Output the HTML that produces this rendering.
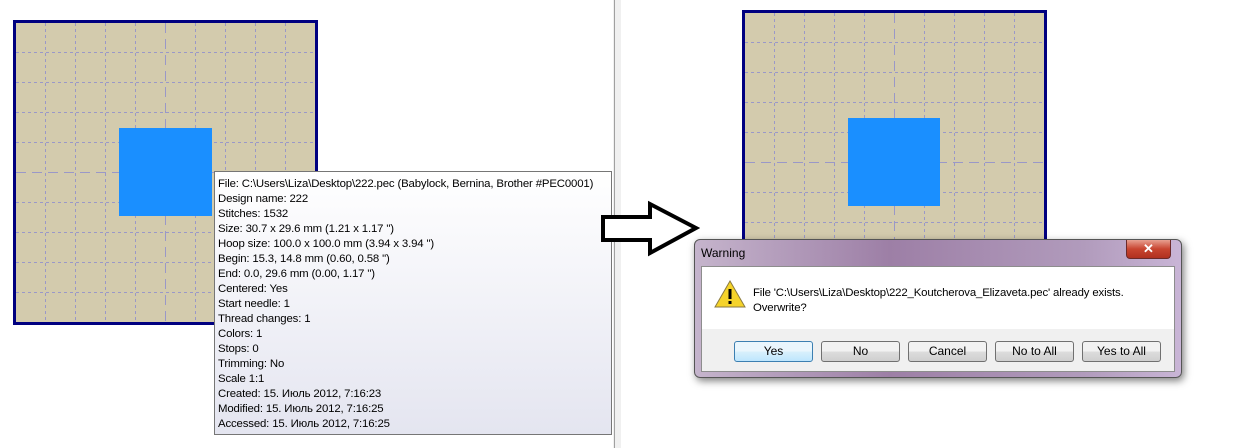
<!DOCTYPE html>
<html><head><style>
body{margin:0;width:1239px;height:448px;background:#fff;position:relative;overflow:hidden;font-family:Tahoma,"Liberation Sans",sans-serif}
.a{position:absolute}
.tip{left:214px;top:171px;width:398px;height:264px;border:1px solid #767676;background:linear-gradient(#fff,#e4e5f0);font-size:11.4px;letter-spacing:-0.15px;line-height:15px;color:#000;padding:5px 0 0 3px;box-sizing:border-box;white-space:nowrap}
.dlg{left:694px;top:239px;width:486px;height:137px;border:1px solid #555;border-radius:6px;background:linear-gradient(90deg,#c5b4cc,#9d7fa6 40%,#b19bbc 80%,#c9b5d6);box-shadow:2px 3px 8px rgba(0,0,0,.5)}
.btn{position:absolute;top:101px;width:77px;height:19px;border:1px solid #707070;border-radius:3px;background:linear-gradient(#f2f2f2 50%,#dddddd 50%,#cfcfcf);font-size:12px;text-align:center;line-height:19px}
</style></head><body>
<svg class="a" style="left:0;top:0" width="1239" height="448">
<rect x="14.5" y="21.5" width="302" height="302" fill="#d3cbad" stroke="#000080" stroke-width="3"/>
<g stroke="#9a98c8" stroke-dasharray="3,3">
<path d="M45.5 23V322M75.5 23V322M105.5 23V322M135.5 23V322M195.5 23V322M225.5 23V322M255.5 23V322M285.5 23V322"/>
<path d="M16 52.5H315M16 82.5H315M16 112.5H315M16 142.5H315M16 202.5H315M16 232.5H315M16 262.5H315M16 292.5H315"/>
</g>
<path d="M165.5 23V322M16 172.5H315" stroke="#9a98c8" stroke-dasharray="10,6"/>
<rect x="119" y="128" width="93" height="88" fill="#1a8fff"/>
<rect x="743.5" y="11.5" width="302" height="302" fill="#d3cbad" stroke="#000080" stroke-width="3"/>
<g stroke="#9a98c8" stroke-dasharray="3,3">
<path d="M774.5 13V312M804.5 13V312M834.5 13V312M864.5 13V312M924.5 13V312M954.5 13V312M984.5 13V312M1014.5 13V312"/>
<path d="M745 42.5H1044M745 72.5H1044M745 102.5H1044M745 132.5H1044M745 192.5H1044M745 222.5H1044M745 252.5H1044M745 282.5H1044"/>
</g>
<path d="M894.5 13V312M745 162.5H1044" stroke="#9a98c8" stroke-dasharray="10,6"/>
<rect x="848" y="118" width="92" height="88" fill="#1a8fff"/>
<rect x="613" y="0" width="8" height="448" fill="#f0f0f0"/>
<line x1="614.5" y1="0" x2="614.5" y2="448" stroke="#a0a0a0"/>
</svg>
<div class="a tip">File: C:\Users\Liza\Desktop\222.pec (Babylock, Bernina, Brother #PEC0001)<br>Design name: 222<br>Stitches: 1532<br>Size: 30.7 x 29.6 mm (1.21 x 1.17 ")<br>Hoop size: 100.0 x 100.0 mm (3.94 x 3.94 ")<br>Begin: 15.3, 14.8 mm (0.60, 0.58 ")<br>End: 0.0, 29.6 mm (0.00, 1.17 ")<br>Centered: Yes<br>Start needle: 1<br>Thread changes: 1<br>Colors: 1<br>Stops: 0<br>Trimming: No<br>Scale 1:1<br>Created: 15. Июль 2012, 7:16:23<br>Modified: 15. Июль 2012, 7:16:25<br>Accessed: 15. Июль 2012, 7:16:25</div>
<svg class="a" style="left:0;top:0" width="700" height="260"><path d="M603 217H650V204L696 228L650 253V240H603Z" fill="#fff" stroke="#000" stroke-width="4"/></svg>
<div class="a dlg">
<div class="a" style="left:6px;top:6px;font-size:12px">Warning</div>
<div class="a" style="left:431px;top:0;width:43px;height:18px;border:1px solid #6b2a2a;border-top:none;border-radius:0 0 4px 4px;background:linear-gradient(#e8a090,#c84530 50%,#b03020);color:#fff;font-weight:bold;font-size:13px;text-align:center;line-height:17px">✕</div>
<div class="a" style="left:6px;top:26px;width:472px;height:104px;background:#f0f0f0;border:1px solid #8d8d8d">
<div class="a" style="left:0;top:0;width:472px;height:62px;background:#fff"></div>
<svg class="a" style="left:12px;top:12px" width="32" height="30"><path d="M16 2L31 28H1Z" fill="#f5d32a" stroke="#8a7a40"/><rect x="14.5" y="10" width="3" height="10" fill="#000"/><rect x="14.5" y="22" width="3" height="3" fill="#000"/></svg>
<div class="a" style="left:51px;top:19px;font-size:11.4px;letter-spacing:-0.15px;line-height:15px">File 'C:\Users\Liza\Desktop\222_Koutcherova_Elizaveta.pec' already exists.<br>Overwrite?</div>
</div>
<div class="btn" style="left:39px;border-color:#3c7fb1;background:linear-gradient(#eaf6fd 50%,#d9f0fc 50%,#bee6fd)">Yes</div>
<div class="btn" style="left:126px">No</div>
<div class="btn" style="left:213px">Cancel</div>
<div class="btn" style="left:300px">No to All</div>
<div class="btn" style="left:387px">Yes to All</div>
</div>
</body></html>
